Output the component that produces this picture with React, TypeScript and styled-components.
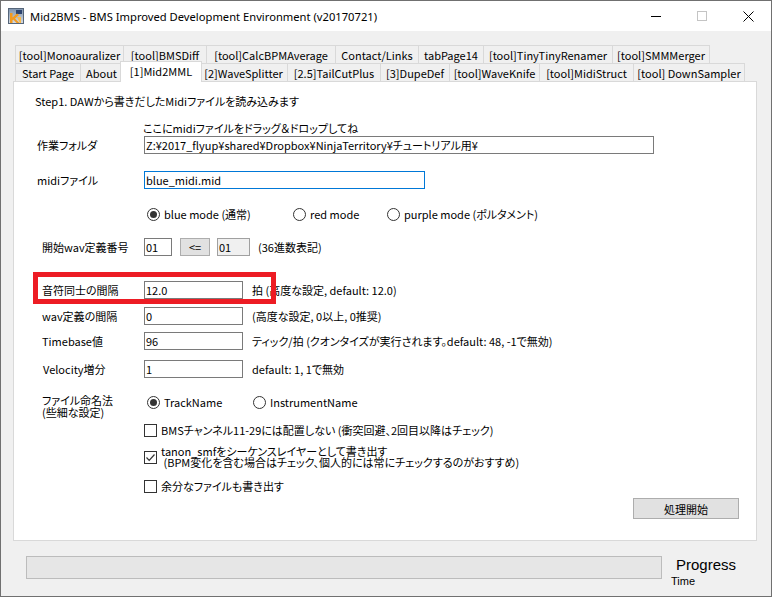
import React from "react";
import styled, { createGlobalStyle } from "styled-components";

const UI_FONT = `"Noto Sans CJK JP", "Liberation Sans", sans-serif`;

const GlobalStyle = createGlobalStyle`
  html, body { margin: 0; padding: 0; background: #f0f0f0; }
  body { font-family: ${UI_FONT}; }
`;

const Window = styled.div`
  width: 772px;
  height: 597px;
  box-sizing: border-box;
  border: 1px solid #707070;
  background: #f0f0f0;
  display: flex;
  flex-direction: column;
  font-family: ${UI_FONT};
  font-size: 11px;
  color: #000;
  font-feature-settings: "palt";
  overflow: hidden;
`;

const TitleBar = styled.div`
  height: 30px;
  flex: none;
  background: #fff;
  display: flex;
  align-items: center;
  padding-left: 7px;
`;

const TitleText = styled.div`
  margin-left: 6px;
  font-family: "Noto Sans", "Liberation Sans", sans-serif;
  font-size: 11.2px;
  font-feature-settings: normal;
  white-space: nowrap;
  color: #000;
`;

const Controls = styled.div`
  margin-left: auto;
  display: flex;
  height: 30px;
`;

const CtrlBtn = styled.div`
  width: 46px;
  height: 30px;
  display: flex;
  align-items: center;
  justify-content: center;
`;

const Client = styled.div`
  flex: 1;
  display: flex;
  flex-direction: column;
  padding: 14px 14px 0 12px;
`;

const TabStrip = styled.div`
  display: flex;
  flex-direction: column;
  padding-left: 2px;
`;

const TabRow = styled.div`
  display: flex;
  height: 18px;
`;

const Tab = styled.div<{ $w: number; $active?: boolean }>`
  box-sizing: border-box;
  flex: none;
  width: ${(p) => p.$w + (p.$active ? 4 : 0)}px;
  height: ${(p) => (p.$active ? 21 : 18)}px;
  margin: ${(p) => (p.$active ? "-2px -3px -1px -2px" : "0 -1px 0 0")};
  border: 1px solid #d9d9d9;
  border-bottom: none;
  background: ${(p) => (p.$active ? "#fff" : "#f0f0f0")};
  position: relative;
  z-index: ${(p) => (p.$active ? 1 : 0)};
  display: flex;
  align-items: center;
  justify-content: center;
  padding-bottom: ${(p) => (p.$active ? 2 : 0)}px;
  white-space: nowrap;
  font-size: 11px;
`;

const Panel = styled.div`
  box-sizing: border-box;
  width: 744px;
  height: 460px;
  flex: none;
  border: 1px solid #d9d9d9;
  background: #fff;
  display: flex;
  flex-direction: column;
  padding: 12px 0 0 21px;
`;

const Row = styled.div<{ $mt: number; $h?: number; $pl?: number; $top?: boolean }>`
  display: flex;
  align-items: ${(p) => (p.$top ? "flex-start" : "center")};
  margin-top: ${(p) => p.$mt}px;
  height: ${(p) => p.$h ?? 18}px;
  padding-left: ${(p) => p.$pl ?? 0}px;
  position: relative;
  white-space: nowrap;
`;

const Label = styled.div<{ $indent?: number; $lh?: number }>`
  box-sizing: border-box;
  width: 109px;
  flex: none;
  padding-left: ${(p) => p.$indent ?? 7}px;
  line-height: ${(p) => p.$lh ?? 14}px;
  white-space: pre;
`;

const TextBox = styled.input<{ $w: number; $focus?: boolean; $ro?: boolean; $ml?: number }>`
  box-sizing: border-box;
  flex: none;
  width: ${(p) => p.$w}px;
  height: 18px;
  margin: 0 0 0 ${(p) => p.$ml ?? 0}px;
  border: 1px solid ${(p) => (p.$focus ? "#0078d7" : p.$ro ? "#a0a0a0" : "#7a7a7a")};
  background: ${(p) => (p.$ro ? "#f0f0f0" : "#fff")};
  padding: 0 1px;
  font-family: ${UI_FONT};
  font-feature-settings: "palt";
  font-size: 11px;
  color: #000;
  outline: none;
`;

const SmallButton = styled.div<{ $w: number; $ml?: number }>`
  box-sizing: border-box;
  width: ${(p) => p.$w}px;
  height: 18px;
  flex: none;
  margin-left: ${(p) => p.$ml ?? 0}px;
  background: #e1e1e1;
  border: 1px solid #adadad;
  display: flex;
  align-items: center;
  justify-content: center;
`;

const Desc = styled.span<{ $ml?: number }>`
  margin-left: ${(p) => p.$ml ?? 9}px;
  white-space: pre;
`;

const Hint = styled.div`
  line-height: 14px;
`;

const RadioItem = styled.label<{ $w?: number }>`
  display: flex;
  align-items: center;
  gap: 4px;
  width: ${(p) => (p.$w ? `${p.$w}px` : "auto")};
  flex: none;
  white-space: pre;
`;

const RadioCircle = styled.span<{ $on?: boolean }>`
  box-sizing: border-box;
  width: 13px;
  height: 13px;
  border: 1px solid #333;
  border-radius: 50%;
  background: #fff;
  display: flex;
  align-items: center;
  justify-content: center;
  &::after {
    content: "";
    width: 7px;
    height: 7px;
    border-radius: 50%;
    background: #333;
    display: ${(p) => (p.$on ? "block" : "none")};
  }
`;

const CheckItem = styled.label`
  display: flex;
  align-items: center;
  gap: 4px;
`;

const CheckBox = styled.span`
  box-sizing: border-box;
  width: 13px;
  height: 13px;
  flex: none;
  border: 1px solid #333;
  background: #fff;
  display: flex;
  align-items: center;
  justify-content: center;
`;

const TwoLine = styled.div<{ $lh: number }>`
  line-height: ${(p) => p.$lh}px;
  white-space: pre;
`;

const NamingRadios = styled.div`
  display: flex;
  align-items: center;
  height: 16px;
  padding-left: 3px;
`;

const Highlight = styled.div`
  position: absolute;
  left: -2px;
  top: -9px;
  width: 243px;
  height: 32px;
  box-sizing: border-box;
  border: 5px solid #ed1c24;
  pointer-events: none;
`;

const ActionButton = styled.div`
  box-sizing: border-box;
  width: 106px;
  height: 21px;
  background: #e1e1e1;
  border: 1px solid #adadad;
  display: flex;
  align-items: center;
  justify-content: center;
`;

const ButtonRow = styled.div`
  display: flex;
  justify-content: flex-end;
  margin-top: 4px;
  padding-right: 17px;
`;

const StatusRow = styled.div`
  display: flex;
  margin-top: 15px;
  padding-left: 13px;
`;

const ProgressBar = styled.div`
  box-sizing: border-box;
  width: 636px;
  height: 23px;
  background: #e6e6e6;
  border: 1px solid #bcbcbc;
`;

const StatusLabels = styled.div`
  margin-left: 9px;
  display: flex;
  flex-direction: column;
  font-family: "Liberation Sans", sans-serif;
  font-feature-settings: normal;
`;

const ProgressText = styled.div`
  font-size: 15px;
  line-height: 18px;
  padding-left: 5px;
`;

const TimeText = styled.div`
  font-size: 11px;
  line-height: 14px;
`;

const AppIcon = () => (
  <svg width="16" height="16" viewBox="0 0 16 16">
    <defs>
      <linearGradient id="ig" x1="0" y1="0" x2="0" y2="1">
        <stop offset="0" stopColor="#7e93ad" />
        <stop offset="1" stopColor="#d7dde4" />
      </linearGradient>
    </defs>
    <rect x="0.5" y="0.5" width="15" height="15" fill="url(#ig)" stroke="#56667a" />
    <rect x="8" y="2" width="6" height="4" fill="#2c4470" />
    <path d="M2 15 L2 5 L4.5 5 L4.5 9.5 L9 5.5 L11 7 L7 10.5 L11.5 15 L8.6 15 L5.2 11.6 L4.5 12.3 L4.5 15 Z" fill="#f39a1e" />
    <path d="M9 9 L13 9 L13 15 L11.8 15 Z" fill="#f7b84a" />
  </svg>
);

const MinIcon = () => (
  <svg width="10" height="10" viewBox="0 0 10 10">
    <line x1="0" y1="5.5" x2="10" y2="5.5" stroke="#000" strokeWidth="1" />
  </svg>
);

const MaxIcon = () => (
  <svg width="10" height="10" viewBox="0 0 10 10">
    <rect x="0.5" y="0.5" width="9" height="9" fill="none" stroke="#c4c4c4" strokeWidth="1" />
  </svg>
);

const CloseIcon = () => (
  <svg width="11" height="11" viewBox="0 0 11 11">
    <path d="M0.5 0.5 L10.5 10.5 M10.5 0.5 L0.5 10.5" stroke="#000" strokeWidth="1" />
  </svg>
);

const CheckMark = () => (
  <svg width="11" height="11" viewBox="0 0 11 11">
    <path d="M1.5 5.5 L4.2 8.3 L9.5 2.5" fill="none" stroke="#333" strokeWidth="1.2" />
  </svg>
);

const row1 = [
  { t: "[tool]Monoauralizer", w: 109 },
  { t: "[tool]BMSDiff", w: 84 },
  { t: "[tool]CalcBPMAverage", w: 130 },
  { t: "Contact/Links", w: 84 },
  { t: "tabPage14", w: 66 },
  { t: "[tool]TinyTinyRenamer", w: 130 },
  { t: "[tool]SMMMerger", w: 98 },
];

const row2 = [
  { t: "Start Page", w: 66 },
  { t: "About", w: 43 },
  { t: "[1]Mid2MML", w: 78, active: true },
  { t: "[2]WaveSplitter", w: 89 },
  { t: "[2.5]TailCutPlus", w: 94 },
  { t: "[3]DupeDef", w: 70 },
  { t: "[tool]WaveKnife", w: 91 },
  { t: "[tool]MidiStruct", w: 95 },
  { t: "[tool] DownSampler", w: 112 },
];

function NamingRadioGroup() {
  return (
    <NamingRadios>
      <RadioItem $w={106}><RadioCircle $on />TrackName</RadioItem>
      <RadioItem><RadioCircle />InstrumentName</RadioItem>
    </NamingRadios>
  );
}

export default function App() {
  return (
    <>
      <GlobalStyle />
      <Window>
        <TitleBar>
          <AppIcon />
          <TitleText>Mid2BMS - BMS Improved Development Environment (v20170721)</TitleText>
          <Controls>
            <CtrlBtn><MinIcon /></CtrlBtn>
            <CtrlBtn><MaxIcon /></CtrlBtn>
            <CtrlBtn><CloseIcon /></CtrlBtn>
          </Controls>
        </TitleBar>
        <Client>
          <TabStrip>
            <TabRow>
              {row1.map((t) => (
                <Tab key={t.t} $w={t.w}>{t.t}</Tab>
              ))}
            </TabRow>
            <TabRow>
              {row2.map((t) => (
                <Tab key={t.t} $w={t.w} $active={t.active}>{t.t}</Tab>
              ))}
            </TabRow>
          </TabStrip>
          <Panel>
            <Row $mt={0} $h={14}>
              <Hint>Step1. DAWから書きだしたMidiファイルを読み込みます</Hint>
            </Row>
            <Row $mt={13} $h={14} $pl={108}>
              <Hint>ここにmidiファイルをドラッグ＆ドロップしてね</Hint>
            </Row>
            <Row $mt={1}>
              <Label $indent={2}>作業フォルダ</Label>
              <TextBox $w={510} readOnly value="Z:¥2017_flyup¥shared¥Dropbox¥NinjaTerritory¥チュートリアル用¥" />
            </Row>
            <Row $mt={17}>
              <Label $indent={2}>midiファイル</Label>
              <TextBox $w={281} $focus readOnly value="blue_midi.mid" />
            </Row>
            <Row $mt={16} $pl={112}>
              <RadioItem $w={146}><RadioCircle $on />blue mode (通常)</RadioItem>
              <RadioItem $w={94}><RadioCircle />red mode</RadioItem>
              <RadioItem><RadioCircle />purple mode (ポルタメント)</RadioItem>
            </Row>
            <Row $mt={15}>
              <Label>開始wav定義番号</Label>
              <TextBox $w={28} readOnly value="01" />
              <SmallButton $w={30} $ml={8}>&lt;=</SmallButton>
              <TextBox $w={33} $ml={7} $ro readOnly value="01" />
              <Desc $ml={8}>(36進数表記)</Desc>
            </Row>
            <Row $mt={25}>
              <Highlight />
              <Label>音符同士の間隔</Label>
              <TextBox $w={99} readOnly value="12.0" />
              <Desc>拍 (高度な設定, default: 12.0)</Desc>
            </Row>
            <Row $mt={8}>
              <Label>wav定義の間隔</Label>
              <TextBox $w={99} readOnly value="0" />
              <Desc>(高度な設定, 0以上, 0推奨)</Desc>
            </Row>
            <Row $mt={7}>
              <Label>Timebase値</Label>
              <TextBox $w={99} readOnly value="96" />
              <Desc>ティック/拍 (クオンタイズが実行されます。default: 48, -1で無効)</Desc>
            </Row>
            <Row $mt={10}>
              <Label $indent={8}>Velocity増分</Label>
              <TextBox $w={99} readOnly value="1" />
              <Desc>default: 1, 1で無効</Desc>
            </Row>
            <Row $mt={16} $h={24} $top>
              <Label $lh={12}>{"ファイル命名法\n(些細な設定)"}</Label>
              <NamingRadioGroup />
            </Row>
            <Row $mt={4} $h={16} $pl={109}>
              <CheckItem><CheckBox />BMSチャンネル11-29には配置しない (衝突回避、2回目以降はチェック)</CheckItem>
            </Row>
            <Row $mt={8} $h={22} $pl={109}>
              <CheckItem>
                <CheckBox><CheckMark /></CheckBox>
                <TwoLine $lh={11}>
                  {"tanon_smfをシーケンスレイヤーとして書き出す\n (BPM変化を含む場合はチェック、個人的には常にチェックするのがおすすめ)"}
                </TwoLine>
              </CheckItem>
            </Row>
            <Row $mt={10} $h={16} $pl={109}>
              <CheckItem><CheckBox />余分なファイルも書き出す</CheckItem>
            </Row>
            <ButtonRow>
              <ActionButton>処理開始</ActionButton>
            </ButtonRow>
          </Panel>
          <StatusRow>
            <ProgressBar />
            <StatusLabels>
              <ProgressText>Progress</ProgressText>
              <TimeText>Time</TimeText>
            </StatusLabels>
          </StatusRow>
        </Client>
      </Window>
    </>
  );
}
